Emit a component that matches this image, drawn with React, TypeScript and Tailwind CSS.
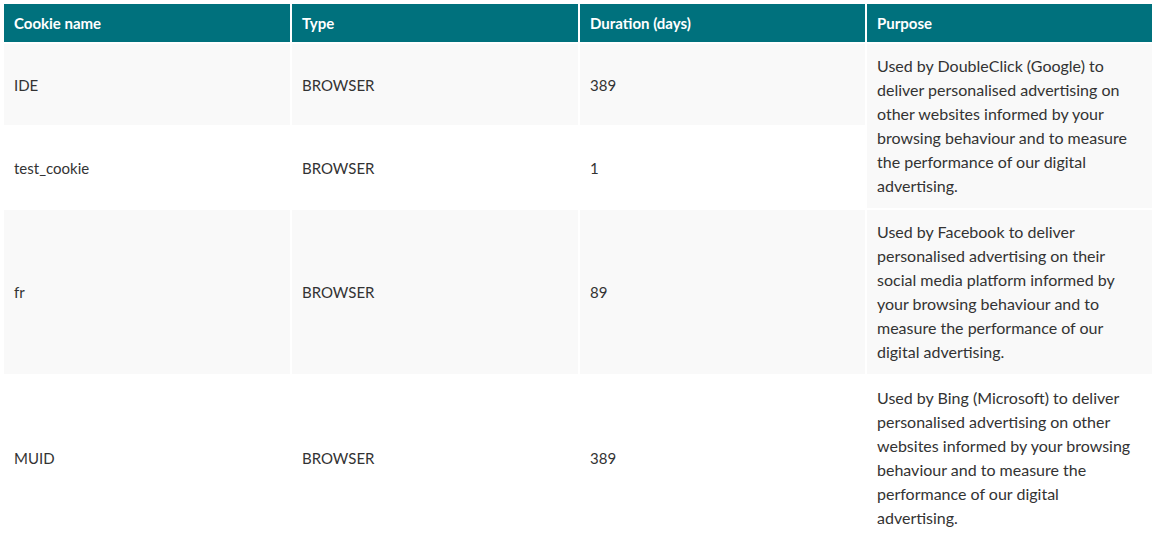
const cookies = [
  {
    name: "IDE",
    type: "BROWSER",
    days: "389",
    purpose:
      "Used by DoubleClick (Google) to deliver personalised advertising on other websites informed by your browsing behaviour and to measure the performance of our digital advertising.",
    span: 2,
  },
  { name: "test_cookie", type: "BROWSER", days: "1" },
  {
    name: "fr",
    type: "BROWSER",
    days: "89",
    purpose:
      "Used by Facebook to deliver personalised advertising on their social media platform informed by your browsing behaviour and to measure the performance of our digital advertising.",
  },
  {
    name: "MUID",
    type: "BROWSER",
    days: "389",
    purpose:
      "Used by Bing (Microsoft) to deliver personalised advertising on other websites informed by your browsing behaviour and to measure the performance of our digital advertising.",
  },
];

const headers = ["Cookie name", "Type", "Duration (days)", "Purpose"];

const App = () => {
  return (
    <div className="bg-white p-[2px] font-['Lato',sans-serif] text-[16px] leading-6 text-[#333333]">
      <table className="w-[1152px] table-fixed border-separate border-spacing-[2px]">
        <colgroup>
          <col className="w-[286px]" />
          <col className="w-[286px]" />
          <col className="w-[285px]" />
          <col className="w-[285px]" />
        </colgroup>
        <thead>
          <tr>
            {headers.map((h) => (
              <th
                key={h}
                className="h-[38px] bg-[#00717d] px-[10px] text-left text-[15px] font-bold text-white"
              >
                {h}
              </th>
            ))}
          </tr>
        </thead>
        <tbody>
          {cookies.map((c, i) => {
            const bg = i % 2 === 0 ? "bg-[#f9f9f9]" : "bg-white";
            return (
              <tr key={c.name}>
                <td className={`${bg} h-[81px] px-[10px] text-[15px] align-middle`}>{c.name}</td>
                <td className={`${bg} px-[10px] text-[15px] align-middle`}>{c.type}</td>
                <td className={`${bg} px-[10px] text-[15px] align-middle`}>{c.days}</td>
                {c.purpose && (
                  <td
                    rowSpan={c.span ?? 1}
                    className={`${bg} px-[10px] py-[10px] align-middle`}
                  >
                    {c.purpose}
                  </td>
                )}
              </tr>
            );
          })}
        </tbody>
      </table>
    </div>
  );
};

export default App;
